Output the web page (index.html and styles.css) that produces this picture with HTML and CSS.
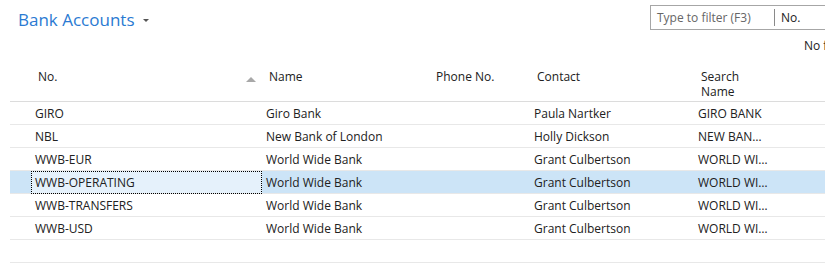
FILE: index.html
```html
<!DOCTYPE html>
<html lang="en">
<head>
    <meta charset="UTF-8">
    <title>Bank Accounts</title>
    <link rel="stylesheet" href="styles.css">
</head>
<body>
    <div class="top-bar">
        <div class="page-title">
            Bank Accounts
            <span class="title-caret"></span>
        </div>
        <div class="filter-box">
            <span class="filter-input">Type to filter (F3)</span>
            <span class="filter-sep"></span>
            <span class="filter-field">No.</span>
        </div>
    </div>
    <div class="filter-status">No filter applied</div>

    <table class="list">
        <colgroup>
            <col class="col-gap">
            <col class="col-no">
            <col class="col-name">
            <col class="col-phone">
            <col class="col-contact">
            <col class="col-search">
            <col class="col-rest">
        </colgroup>
        <tr class="list-head">
            <th></th>
            <th class="sorted">No.<span class="sort-arrow"></span></th>
            <th>Name</th>
            <th>Phone No.</th>
            <th>Contact</th>
            <th>Search Name</th>
            <th></th>
        </tr>
        <tr>
            <td></td><td>GIRO</td><td>Giro Bank</td><td></td><td>Paula Nartker</td><td>GIRO BANK</td><td></td>
        </tr>
        <tr>
            <td></td><td>NBL</td><td>New Bank of London</td><td></td><td>Holly Dickson</td><td>NEW BANK OF LONDON</td><td></td>
        </tr>
        <tr>
            <td></td><td>WWB-EUR</td><td>World Wide Bank</td><td></td><td>Grant Culbertson</td><td>WORLD WIDE BANK</td><td></td>
        </tr>
        <tr class="selected">
            <td></td><td class="focused">WWB-OPERATING</td><td>World Wide Bank</td><td></td><td>Grant Culbertson</td><td>WORLD WIDE BANK</td><td></td>
        </tr>
        <tr>
            <td></td><td>WWB-TRANSFERS</td><td>World Wide Bank</td><td></td><td>Grant Culbertson</td><td>WORLD WIDE BANK</td><td></td>
        </tr>
        <tr>
            <td></td><td>WWB-USD</td><td>World Wide Bank</td><td></td><td>Grant Culbertson</td><td>WORLD WIDE BANK</td><td></td>
        </tr>
        <tr class="empty">
            <td></td><td></td><td></td><td></td><td></td><td></td><td></td>
        </tr>
    </table>
</body>
</html>
```

FILE: styles.css
```css
body {
    margin: 0;
    overflow: hidden;
    background-color: #ffffff;
    font-family: "Open Sans", "Noto Sans", Arial, sans-serif;
    font-size: 12px;
    color: #212121;
}


.top-bar {
    display: flex;
    align-items: flex-start;
    height: 36px;
}
.page-title {
    flex: 1;
    display: flex;
    align-items: center;
    padding: 6px 0 0 18px;
    font-size: 17px;
    line-height: 28px;
    color: #2a7ad2;
}
.title-caret {
    margin-left: 9px;
    margin-top: 1px;
    border-left: 3px solid transparent;
    border-right: 3px solid transparent;
    border-top: 3px solid #555555;
}
.filter-box {
    display: flex;
    align-items: center;
    width: 200px;
    height: 23px;
    margin-top: 5px;
    margin-right: -27px;
    border: 1px solid #a6a6a6;
    box-sizing: content-box;
}
.filter-input {
    width: 117px;
    padding-left: 6px;
    color: #666666;
}
.filter-sep {
    width: 1px;
    height: 17px;
    background-color: #8a8a8a;
}
.filter-field {
    padding-left: 6px;
}
.filter-status {
    margin-left: 804px;
    width: 120px;
    height: 22px;
    overflow: hidden;
    white-space: nowrap;
    line-height: 20px;
}


.list {
    margin-left: 10px;
    border-collapse: collapse;
    table-layout: fixed;
    width: 900px;
}
.col-gap { width: 21px; }
.col-no { width: 231px; }
.col-name { width: 167px; }
.col-phone { width: 101px; }
.col-contact { width: 164px; }
.col-search { width: 78px; }
.col-rest { width: 138px; }

.list th {
    height: 32px;
    padding: 11px 4px 0 7px;
    vertical-align: top;
    text-align: left;
    font-weight: 400;
    line-height: 15px;
    border-bottom: 1px solid #dcdcdc;
}
.list th.sorted {
    position: relative;
}
.sort-arrow {
    position: absolute;
    right: 6px;
    top: 19px;
    border-left: 5px solid transparent;
    border-right: 5px solid transparent;
    border-bottom: 5px solid #a8a8a8;
}
.list td {
    height: 22px;
    padding: 0 4px;
    white-space: nowrap;
    overflow: hidden;
    text-overflow: ellipsis;
    border-bottom: 1px solid #e8e8e8;
}
.list tr.selected td {
    background-color: #cce4f7;
}
.list tr.selected td.focused {
    background-color: #e5f1fb;
    outline: 1px dotted #000000;
    outline-offset: -1px;
}
```
